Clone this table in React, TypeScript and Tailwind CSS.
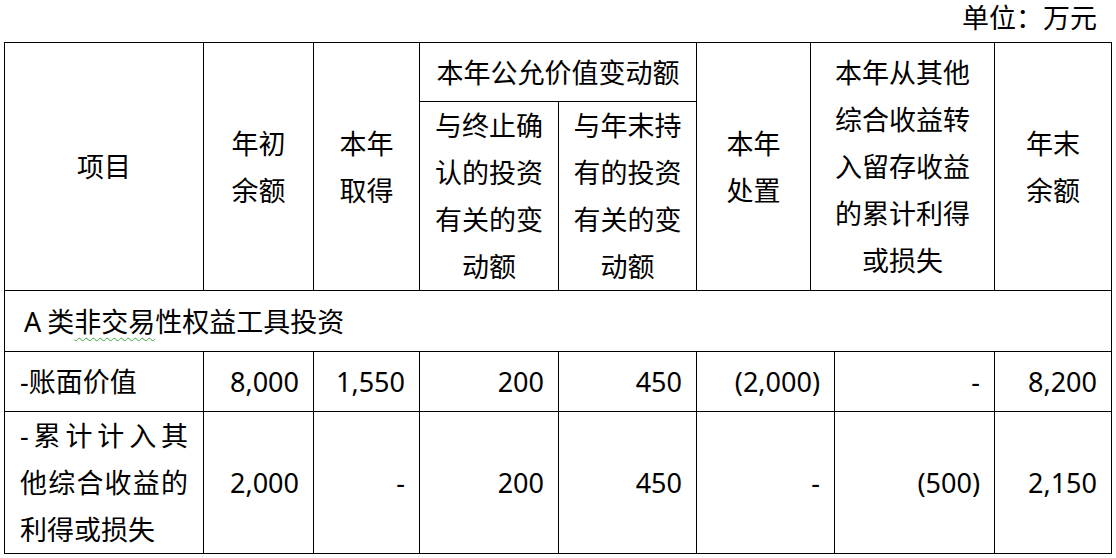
export default function App() {
  const cell = "border border-black align-middle p-0";
  const head = `${cell} text-center`;
  const num = `${cell} text-right pr-[14px]`;

  return (
    <div className="w-[1116px] h-[558px] bg-white text-black font-['Noto_Sans','Noto_Sans_CJK_SC',sans-serif] text-[27px]">
      {/* Unit caption */}
      <div className="h-[42px] leading-[36px] text-right pr-[19px]">单位：万元</div>

      <table className="ml-[4px] w-[1107px] table-fixed border-collapse leading-[47px]">
        <colgroup>
          <col className="w-[199px]" />
          <col className="w-[110px]" />
          <col className="w-[106px]" />
          <col className="w-[139px]" />
          <col className="w-[138px]" />
          <col className="w-[114px]" />
          <col className="w-[24px]" />
          <col className="w-[160px]" />
          <col className="w-[117px]" />
        </colgroup>
        <tbody>
          {/* Header */}
          <tr className="h-[59px]">
            <td rowSpan={2} className={head}>项目</td>
            <td rowSpan={2} className={head}>
              <div>年初</div>
              <div>余额</div>
            </td>
            <td rowSpan={2} className={head}>
              <div>本年</div>
              <div>取得</div>
            </td>
            <td colSpan={2} className={head}>本年公允价值变动额</td>
            <td rowSpan={2} className={head}>
              <div>本年</div>
              <div>处置</div>
            </td>
            <td rowSpan={2} colSpan={2} className={head}>
              <div>本年从其他</div>
              <div>综合收益转</div>
              <div>入留存收益</div>
              <div>的累计利得</div>
              <div>或损失</div>
            </td>
            <td rowSpan={2} className={head}>
              <div>年末</div>
              <div>余额</div>
            </td>
          </tr>
          <tr className="h-[188px]">
            <td className={head}>
              <div>与终止确</div>
              <div>认的投资</div>
              <div>有关的变</div>
              <div>动额</div>
            </td>
            <td className={head}>
              <div>与年末持</div>
              <div>有的投资</div>
              <div>有关的变</div>
              <div>动额</div>
            </td>
          </tr>

          {/* Section title */}
          <tr className="h-[61px]">
            <td colSpan={9} className={`${cell} pl-[19px]`}>
              <span className="mr-[6px]">A</span>类
              <span className="underline decoration-wavy decoration-[#3aa63a] decoration-1 underline-offset-[5px]">
                非交易
              </span>
              性权益工具投资
            </td>
          </tr>

          {/* Book value */}
          <tr className="h-[60px]">
            <td className={`${cell} pl-[15px]`}>-账面价值</td>
            <td className={num}>8,000</td>
            <td className={num}>1,550</td>
            <td className={num}>200</td>
            <td className={num}>450</td>
            <td colSpan={2} className={num}>(2,000)</td>
            <td className={num}>-</td>
            <td className={num}>8,200</td>
          </tr>

          {/* Accumulated OCI */}
          <tr className="h-[142px]">
            <td className={`${cell} pl-[15px] pr-[15px]`}>
              <div className="text-justify [text-align-last:justify]">-累计计入其</div>
              <div className="text-justify [text-align-last:justify]">他综合收益的</div>
              <div>利得或损失</div>
            </td>
            <td className={num}>2,000</td>
            <td className={num}>-</td>
            <td className={num}>200</td>
            <td className={num}>450</td>
            <td colSpan={2} className={num}>-</td>
            <td className={num}>(500)</td>
            <td className={num}>2,150</td>
          </tr>
        </tbody>
      </table>
    </div>
  );
}
